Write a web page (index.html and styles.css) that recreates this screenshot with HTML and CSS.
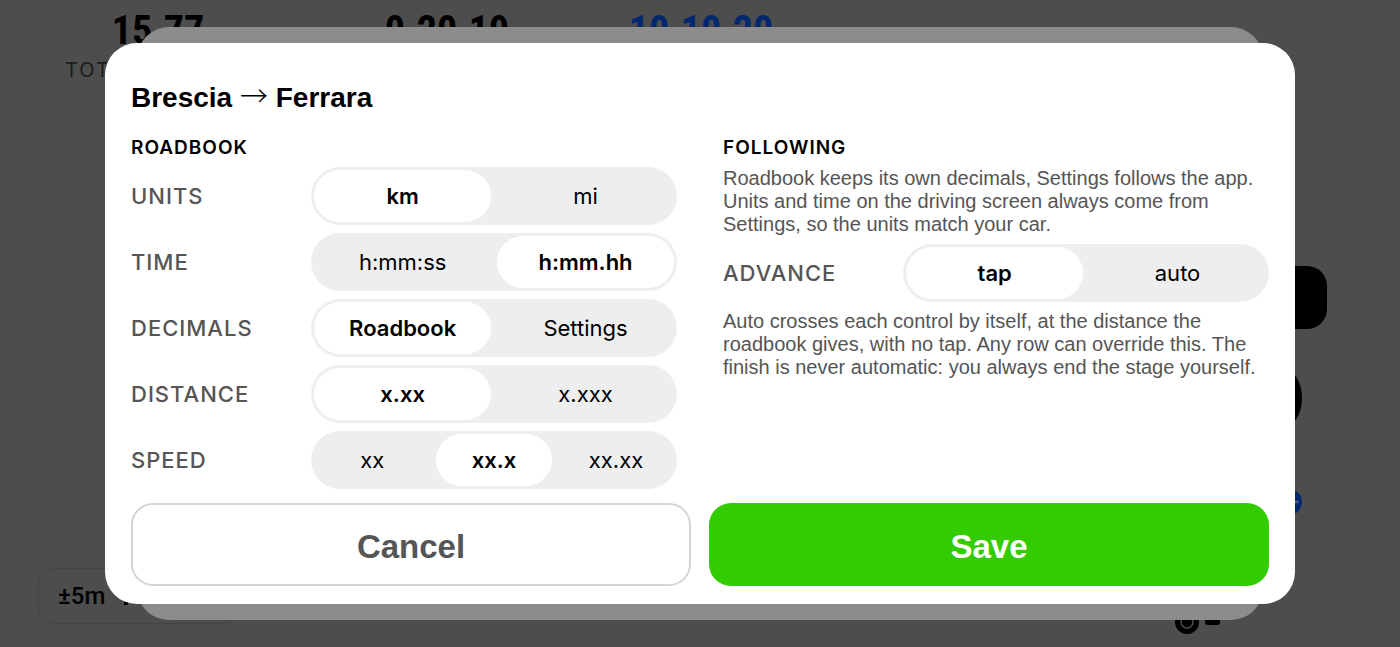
FILE: index.html
```html
<!DOCTYPE html>
<html lang="en">
<head>
<meta charset="utf-8">
<meta name="viewport" content="width=device-width, initial-scale=1">
<title>Brescia → Ferrara</title>
<link rel="stylesheet" href="styles.css">
</head>
<body>
<main class="screen">
  <header class="stats">
    <div class="stat">
      <span class="stat-value">15.77</span>
      <span class="stat-label">TOTAL</span>
    </div>
    <div class="stat"><span class="stat-value">0.20.19</span></div>
    <div class="stat"><span class="stat-value stat-value-clock">10.10.20</span></div>
  </header>
  <div class="adjust">±5m<span class="adjust-mark"></span></div>
  <span class="pin pin-box"></span>
  <span class="pin pin-drop"></span>
  <svg class="pin pin-dot" width="26" height="26" viewBox="0 0 26 26" aria-hidden="true">
    <circle cx="13" cy="13" r="13" fill="#04286e"/>
    <path d="M16 13h5.500" stroke="#4d5f86" stroke-width="2.500" stroke-linecap="round"/>
  </svg>
  <svg class="pin pin-wheel" width="46" height="24" viewBox="0 0 46 24" aria-hidden="true">
    <circle cx="12" cy="12" r="12" fill="#000"/>
    <circle cx="12" cy="12" r="6" fill="none" stroke="#4d4d4d" stroke-width="1.500"/>
    <rect x="30" y="7" width="15" height="8" rx="3" fill="#000"/>
  </svg>
</main>

<div class="overlay">
  <form class="dialog" role="dialog" aria-labelledby="dialog-title">
    <h1 class="title" id="dialog-title">Brescia <span class="arrow">→</span> Ferrara</h1>

    <div class="columns">
      <section class="column">
        <h2 class="heading">ROADBOOK</h2>
        <div class="rows">
          <div class="row" role="radiogroup" aria-labelledby="l-units">
            <span class="row-label" id="l-units">UNITS</span>
            <div class="segments">
              <label class="segment"><input type="radio" name="units" checked><span>km</span></label>
              <label class="segment"><input type="radio" name="units"><span>mi</span></label>
            </div>
          </div>
          <div class="row" role="radiogroup" aria-labelledby="l-time">
            <span class="row-label" id="l-time">TIME</span>
            <div class="segments">
              <label class="segment"><input type="radio" name="time"><span>h:mm:ss</span></label>
              <label class="segment"><input type="radio" name="time" checked><span>h:mm.hh</span></label>
            </div>
          </div>
          <div class="row" role="radiogroup" aria-labelledby="l-decimals">
            <span class="row-label" id="l-decimals">DECIMALS</span>
            <div class="segments">
              <label class="segment"><input type="radio" name="decimals" checked><span>Roadbook</span></label>
              <label class="segment"><input type="radio" name="decimals"><span>Settings</span></label>
            </div>
          </div>
          <div class="row" role="radiogroup" aria-labelledby="l-distance">
            <span class="row-label" id="l-distance">DISTANCE</span>
            <div class="segments">
              <label class="segment"><input type="radio" name="distance" checked><span>x.xx</span></label>
              <label class="segment"><input type="radio" name="distance"><span>x.xxx</span></label>
            </div>
          </div>
          <div class="row" role="radiogroup" aria-labelledby="l-speed">
            <span class="row-label" id="l-speed">SPEED</span>
            <div class="segments">
              <label class="segment"><input type="radio" name="speed"><span>xx</span></label>
              <label class="segment"><input type="radio" name="speed" checked><span>xx.x</span></label>
              <label class="segment"><input type="radio" name="speed"><span>xx.xx</span></label>
            </div>
          </div>
        </div>
      </section>

      <section class="column">
        <h2 class="heading">FOLLOWING</h2>
        <div class="rows">
          <p class="note">Roadbook keeps its own decimals, Settings follows the app. Units and time on the driving screen always come from Settings, so the units match your car.</p>
          <div class="row" role="radiogroup" aria-labelledby="l-advance">
            <span class="row-label" id="l-advance">ADVANCE</span>
            <div class="segments">
              <label class="segment"><input type="radio" name="advance" checked><span>tap</span></label>
              <label class="segment"><input type="radio" name="advance"><span>auto</span></label>
            </div>
          </div>
          <p class="note">Auto crosses each control by itself, at the distance the roadbook gives, with no tap. Any row can override this. The finish is never automatic: you always end the stage yourself.</p>
        </div>
      </section>
    </div>

    <div class="actions">
      <button class="button button-cancel" type="button">Cancel</button>
      <button class="button button-save" type="submit">Save</button>
    </div>
  </form>
</div>
</body>
</html>
```

FILE: styles.css
```css
* {
  box-sizing: border-box;
}

body {
  margin: 0;
  min-height: 100vh;
  overflow: hidden;
  background: #4d4d4d;
  color: #000;
  font-family: "Liberation Sans", Arial, sans-serif;
}

/* Dimmed driving screen */
.screen {
  display: flex;
  flex-direction: column;
  justify-content: space-between;
  align-items: flex-start;
  position: relative;
  height: 100vh;
  padding: 9px 0 23px;
}

.stats {
  display: grid;
  grid-template-columns: 316fr 262fr 246fr 576fr;
  width: 100%;
}

.stat {
  display: flex;
  flex-direction: column;
  align-items: center;
}

.stat-value {
  font-family: "Liberation Sans Narrow", "Roboto Condensed", Roboto, sans-serif;
  font-size: 40px;
  font-weight: 700;
  line-height: 44px;
}

.stat-value-clock {
  color: #04286e;
}

.stat-label {
  align-self: flex-start;
  padding-left: 65px;
  color: #1c1c1c;
  font-family: Inter, sans-serif;
  font-size: 20px;
  letter-spacing: 2px;
  line-height: 34px;
}

.adjust {
  display: flex;
  align-items: flex-end;
  gap: 19px;
  width: 200px;
  height: 56px;
  margin-left: 38px;
  padding-left: 19px;
  border: 1px solid #434343;
  border-radius: 18px;
  font-family: Roboto, sans-serif;
  font-size: 24px;
  font-weight: 500;
  line-height: 54px;
}

.adjust-mark {
  width: 4px;
  height: 4px;
  margin-bottom: 18px;
  background: #000;
}

.pin {
  position: absolute;
}

.pin-box {
  top: 266px;
  right: 73px;
  width: 90px;
  height: 63px;
  border-radius: 20px;
  background: #000;
}

.pin-drop {
  top: 368px;
  right: 98px;
  width: 40px;
  height: 60px;
  border-radius: 50%;
  background: #000;
}

.pin-dot {
  top: 489px;
  right: 98px;
}

.pin-wheel {
  top: 610px;
  right: 179px;
}

/* Dialog */
.overlay {
  display: flex;
  align-items: center;
  position: absolute;
  inset: 0;
  padding: 0 7.5%;
}

.dialog {
  position: relative;
  flex: 1;
  isolation: isolate;
  padding: 38px 26px 18px;
  border-radius: 32px;
}

.dialog::before,
.dialog::after {
  content: "";
  position: absolute;
  z-index: -1;
}

.dialog::before {
  inset: -16px 32px;
  border-radius: 32px;
  background: #8c8c8c;
}

.dialog::after {
  inset: 0;
  border-radius: 32px;
  background: #fff;
}

.title {
  margin: 0 0 22px;
  font-size: 28px;
  line-height: 34px;
}

.arrow {
  font-family: "Noto Sans CJK JP", sans-serif;
  font-weight: 300;
  line-height: 1;
}

.columns {
  display: grid;
  grid-template-columns: 1fr 1fr;
  gap: 46px;
}

.heading {
  margin: 0 0 8px;
  font-family: Inter, sans-serif;
  font-size: 19px;
  font-weight: 600;
  letter-spacing: 1px;
  line-height: 22px;
}

.rows {
  display: flex;
  flex-direction: column;
  gap: 8px;
}

.row {
  display: flex;
  align-items: center;
  justify-content: space-between;
}

.row-label {
  color: #555;
  font-family: Inter, sans-serif;
  font-size: 22px;
  font-weight: 500;
  letter-spacing: 1px;
}

.segments {
  display: flex;
  gap: 6px;
  width: 67%;
  height: 58px;
  padding: 3px;
  border-radius: 29px;
  background: #eee;
}

.segment {
  display: flex;
  flex: 1 1 0;
  position: relative;
  font-family: Inter, sans-serif;
  font-size: 22px;
  cursor: pointer;
}

.segment input {
  position: absolute;
  inset: 0;
  margin: 0;
  opacity: 0;
}

.segment span {
  display: flex;
  flex: 1;
  align-items: center;
  justify-content: center;
  border-radius: 26px;
}

.segment input:checked + span {
  background: #fff;
  font-weight: 600;
}

.note {
  margin: 0;
  color: #555;
  font-size: 20px;
  line-height: 23px;
}

.actions {
  display: grid;
  grid-template-columns: 1fr 1fr;
  gap: 18px;
  margin-top: 14px;
}

.button {
  height: 83px;
  padding: 4px 0 0;
  border: 0;
  border-radius: 22px;
  font-family: inherit;
  font-size: 33px;
  font-weight: 700;
}

.button-cancel {
  border: 2px solid #d5d5d5;
  background: #fff;
  color: #555;
}

.button-save {
  background: #33cc00;
  color: #fff;
}
```
